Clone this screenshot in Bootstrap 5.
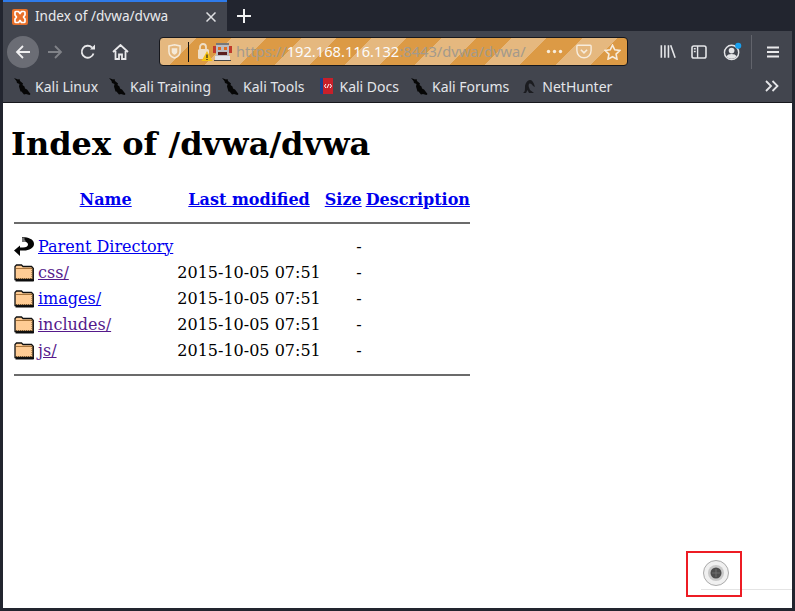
<!DOCTYPE html>
<html lang="en">
<head>
<meta charset="utf-8">
<title>Index of /dvwa/dvwa</title>
<link href="https://cdn.jsdelivr.net/npm/bootstrap@5.3.0/dist/css/bootstrap.min.css" rel="stylesheet">
<style>
html,body{height:100%;margin:0}
body{background:#22252f;overflow:hidden;font-family:"Noto Sans",sans-serif}
.frame{width:795px;height:611px;padding:0 3px 3px;position:relative}
.tabstrip{height:31px}
.tabitem{width:224px;height:31px;background:#42454e;border-top:2px solid #2f7bea;color:#e9eaed;font-size:13.6px;padding-left:9px;gap:7px}
.tabitem .tabname{flex:1;white-space:nowrap}
.tabclose{margin-right:11px}
.plusbtn{margin-left:10px}
.toolbar{height:41px;background:#42454e;padding-left:4px}
.navback{width:32px;height:32px;border-radius:50%;background:#6b6d75;flex:none}
.navitem{width:32px;height:32px;flex:none}
.navgap{margin-left:1px}
.urlbar{width:469px;height:29px;margin-left:23px;border:1px solid #17181d;border-radius:4px;flex:none;
 background:repeating-linear-gradient(135deg,#dc9a45 0,#dc9a45 1.4px,#e5b87f 1.4px,#e5b87f 26.15px,#dc9a45 26.15px,#dc9a45 49.5px);font-size:14.7px;white-space:nowrap;overflow:hidden}
.urlshield{margin-left:8px}
.urlsep{width:1px;height:20px;background:#111;margin:0 8px 0 7px}
.urlrobot{margin:0 4px 0 0}
.urlgrey{color:#a39a8c}
.urlhost{color:#fbfbfb}
.urlpocket{margin:0 12px 0 13px}
.urlstar{margin-right:6px}
.rightgroup{margin-left:24px}
.ricon-lib{margin:0 15px 0 8px}
.ricon-side{margin-right:16px}
.rsep{width:1px;height:34px;background:#62646c;margin:0 2px 0 8px}
.ricon-menu{margin-left:13px}
.bookbar{height:31px;background:#42454e;color:#e4e6ea;font-size:14px;padding-left:11px;border-bottom:1px solid #17181d;padding-bottom:2px}
.bookitem{gap:4px;margin-right:11px;white-space:nowrap}
.bookdocs{gap:6px;margin-left:5px;margin-right:12px}
.bookforums{margin-right:13px}
.bookhunter{gap:5px}
.bookmore{margin-left:auto;margin-right:13px}
.pagebody{background:#fff;height:505px;padding:0 8px;font-family:"DejaVu Serif",serif;color:#000;font-size:16px}
.pagebody h1{font-family:"DejaVu Serif",serif;font-weight:700;font-size:32px;margin:0;padding-top:22px;height:72px;line-height:38px}
.listing{border-collapse:separate;border-spacing:2px;margin-top:10px}
.listing th,.listing td{padding:1px;line-height:19px;font-size:16px;vertical-align:middle;white-space:nowrap}
.listing tr.rowfile td{height:24px}
.listing tr.rowfile td:not(:first-child){padding-top:0;padding-bottom:2px}
.listing th{height:24px;text-align:center}
.listing a{color:#0000ee;text-decoration:underline}
.listing a.seen{color:#551a8b}
.listing .rightcell{text-align:right}
.listing svg{display:block}
.rulecell hr{margin:0;border:0;height:2px;background:#6b6b6b;opacity:1}
.listing td.rulecell{height:20px}
.markbox{position:absolute;left:686px;top:551px;width:56px;height:46px;border:2px solid #ed1c24}
.markline{position:absolute;left:701px;top:589px;width:91px;height:1px;background:#e4e4e4}
.markdot{position:absolute;left:703px;top:560px;width:26px;height:26px}
</style>
</head>
<body>
<div class="frame">
  <svg width="0" height="0" class="d-block position-absolute">
    <defs>
      <symbol id="kali" viewBox="0 0 17 17"><path d="M0 0l4 1.500 1.500-.5.500 2 3 2.500-.5 1.500 2 1.500.5 2 2 1 3.500 4.500-1 1-3.500-1-2 .5-2.500-3-1 0L5 8.500 5.500 6 3 5 2.500 3z" fill="#060606"/></symbol>
      <symbol id="folder" viewBox="0 0 20 20"><path d="M1 5V3.500L2.500 2h5L9 3.500h8.500L19 5v11.500H1z" fill="#ffcc94" stroke="#111" stroke-width="1.300"/><path d="M2 5.500h16" stroke="#a8743a" stroke-width="1"/><path d="M2 15.500h16.500M18 5v11" stroke="#7a5426" stroke-width="1" stroke-dasharray="1 1"/><path d="M1.500 17.800h17.500l1-1V5" fill="none" stroke="#0c0c0c" stroke-width="1.600"/></symbol>
    </defs>
  </svg>
  <div class="tabstrip d-flex align-items-center">
    <div class="tabitem d-flex align-items-center">
      <svg width="16" height="16" viewBox="0 0 16 16"><rect width="16" height="16" rx="2" fill="#e8702a"/><path d="M3 3.500Q3 2.500 4 2.500h2.500L8 4.500l1.500-2H12q1 0 1 1V6l-1.500 2L13 10v2.500q0 1-1 1H9.500L8 11.500l-1.500 2H4q-1 0-1-1V10l1.500-2L3 6z" fill="none" stroke="#fff" stroke-width="1.700" stroke-linejoin="round"/></svg>
      <span class="tabname">Index of /dvwa/dvwa</span>
      <svg class="tabclose" width="10" height="10" viewBox="0 0 10 10"><path d="M.5.500l9 9M9.500.500l-9 9" stroke="#dfe0e3" stroke-width="1.500"/></svg>
    </div>
    <svg class="plusbtn" width="14" height="14" viewBox="0 0 14 14"><path d="M7 0v14M0 7h14" stroke="#f2f2f3" stroke-width="2"/></svg>
  </div>
  <div class="toolbar d-flex align-items-center">
    <div class="navback d-flex align-items-center justify-content-center">
      <svg width="16" height="16" viewBox="0 0 16 16"><path d="M15 8H2M8 2L2 8l6 6" fill="none" stroke="#f0f0f1" stroke-width="1.800"/></svg>
    </div>
    <div class="navitem d-flex align-items-center justify-content-center">
      <svg width="16" height="16" viewBox="0 0 16 16"><path d="M1 8h13M8 2l6 6-6 6" fill="none" stroke="#808288" stroke-width="1.800"/></svg>
    </div>
    <div class="navitem navgap d-flex align-items-center justify-content-center">
      <svg width="16" height="16" viewBox="0 0 16 16"><path d="M13.500 9.500A6 6 0 1 1 12 3.500" fill="none" stroke="#e9e9eb" stroke-width="1.800"/><path d="M10 5.500h5v-5z" fill="#e9e9eb"/></svg>
    </div>
    <div class="navitem d-flex align-items-center justify-content-center">
      <svg width="17" height="16" viewBox="0 0 17 16"><path d="M1 8l7.500-7L16 8M3.500 7v8h3.500v-4.500h3V15h3.500V7" fill="none" stroke="#e9e9eb" stroke-width="1.800"/></svg>
    </div>
    <div class="urlbar d-flex align-items-center">
      <svg class="urlshield" width="13" height="15" viewBox="0 0 14 16"><path d="M1 2l6-1.200L13 2v6c0 3.500-3 6-6 7-3-1-6-3.500-6-7z" fill="none" stroke="#f5ead9" stroke-width="1.600"/><path d="M4 4.500h6V8c0 1.800-1.500 3-3 3.600C5.500 11 4 9.800 4 8z" fill="#f5ead9"/></svg>
      <span class="urlsep"></span>
      <svg width="16" height="20" viewBox="0 0 16 20"><path d="M3 7V5a3 3 0 0 1 6 0v2" fill="none" stroke="#efdfc7" stroke-width="1.800"/><rect x="1" y="7" width="11" height="10" rx="1.500" fill="#efdfc7"/><path d="M10 9l5.500 10H4.500z" fill="#f6c214"/><path d="M10 12.500v3.500M10 17v1" stroke="#222" stroke-width="1.200"/></svg>
      <svg class="urlrobot" width="19" height="19" viewBox="0 0 18 18" shape-rendering="crispEdges"><rect x="3" y="1" width="12" height="2" fill="#777"/><rect x="3" y="3" width="12" height="10" fill="#b9bcc2"/><rect x="0" y="4" width="3" height="6" fill="#c0392b"/><rect x="15" y="4" width="3" height="6" fill="#c0392b"/><rect x="5" y="5" width="3" height="3" fill="#e06a1e"/><rect x="10" y="5" width="3" height="3" fill="#e06a1e"/><rect x="5" y="9" width="8" height="3" fill="#5a1f1f"/><rect x="2" y="13" width="14" height="4" fill="#e3e5ea"/><rect x="1" y="17" width="16" height="1" fill="#444"/></svg>
      <span class="urlgrey">https://</span><span class="urlhost">192.168.116.132</span><span class="urlgrey">:8443/dvwa/dvwa/</span>
      <span class="ms-auto d-flex align-items-center">
        <svg width="17" height="5" viewBox="0 0 17 5"><circle cx="2.500" cy="2.500" r="1.700" fill="#f7ecdc"/><circle cx="8.500" cy="2.500" r="1.700" fill="#f7ecdc"/><circle cx="14.500" cy="2.500" r="1.700" fill="#f7ecdc"/></svg>
        <svg class="urlpocket" width="16" height="15" viewBox="0 0 18 16"><path d="M2 1h14a1 1 0 0 1 1 1v5a8 8 0 0 1-16 0V2a1 1 0 0 1 1-1z" fill="none" stroke="#f7ecdc" stroke-width="1.600"/><path d="M5.500 6L9 9.500 12.500 6" fill="none" stroke="#f7ecdc" stroke-width="1.800"/></svg>
        <svg class="urlstar" width="17" height="16" viewBox="0 0 18 17"><path d="M9 1.200l2.400 5 5.400.7-4 3.800 1 5.400L9 13.500l-4.800 2.600 1-5.400-4-3.800 5.400-.7z" fill="none" stroke="#f7ecdc" stroke-width="1.700"/></svg>
      </span>
    </div>
    <div class="rightgroup d-flex align-items-center">
      <svg class="ricon-lib" width="16" height="15" viewBox="0 0 18 16"><path d="M1.500 1v14M5.500 1v14M9.500 1v14M12 1l5 14" stroke="#e4e5e8" stroke-width="1.800" fill="none"/></svg>
      <svg class="ricon-side" width="16" height="14" viewBox="0 0 17 15"><rect x="1" y="1" width="15" height="13" rx="2" fill="none" stroke="#e4e5e8" stroke-width="1.700"/><path d="M7 1v13M3 4h2M3 7h2" stroke="#e4e5e8" stroke-width="1.500"/></svg>
      <svg width="20" height="19" viewBox="0 0 21 20"><circle cx="9" cy="11" r="7.500" fill="none" stroke="#e4e5e8" stroke-width="1.500"/><circle cx="9" cy="9" r="3" fill="#e4e5e8"/><path d="M3.500 15a6 4 0 0 1 11 0 7 7 0 0 1-11 0z" fill="#e4e5e8"/><circle cx="16" cy="4" r="3.200" fill="#18a0f0"/></svg>
      <span class="rsep"></span>
      <svg class="ricon-menu" width="12" height="12" viewBox="0 0 12 12"><path d="M0 1.500h12M0 6h12M0 10.500h12" stroke="#e9e9eb" stroke-width="1.800"/></svg>
    </div>
  </div>
  <div class="bookbar d-flex align-items-center">
    <span class="bookitem d-flex align-items-center"><svg width="17" height="17"><use href="#kali"/></svg>Kali Linux</span>
    <span class="bookitem d-flex align-items-center"><svg width="17" height="17"><use href="#kali"/></svg>Kali Training</span>
    <span class="bookitem d-flex align-items-center"><svg width="17" height="17"><use href="#kali"/></svg>Kali Tools</span>
    <span class="bookitem bookdocs d-flex align-items-center"><svg width="13" height="16" viewBox="0 0 13 16"><rect width="13" height="16" fill="#c8202a"/><rect width="3" height="16" fill="#1d3f8a"/><path d="M6 6L4.500 8 6 10M10 6l1.500 2L10 10M7 10l2-4" stroke="#fff" fill="none"/></svg>Kali Docs</span>
    <span class="bookitem bookforums d-flex align-items-center"><svg width="17" height="17"><use href="#kali"/></svg>Kali Forums</span>
    <span class="bookitem bookhunter d-flex align-items-center"><svg width="15" height="16" viewBox="0 0 15 16"><path d="M1 15c2-1 2-3 2-6 0-3 2-7 5-7 2 0 3 2 4 4l1 3-2-1c-1-2-3-3-4-2s0 4 1 6l4 3H7L5.500 12 4 15z" fill="#1b1c20"/></svg>NetHunter</span>
    <svg class="bookmore" width="14" height="12" viewBox="0 0 14 12"><path d="M1 1l5 5-5 5M7.500 1l5 5-5 5" fill="none" stroke="#e4e5e8" stroke-width="1.800"/></svg>
  </div>
  <div class="pagebody">
    <h1>Index of /dvwa/dvwa</h1>
    <table class="listing">
      <tr><th></th><th><a href="#">Name</a></th><th><a href="#">Last modified</a></th><th><a href="#">Size</a></th><th><a href="#">Description</a></th></tr>
      <tr><td colspan="5" class="rulecell"><hr></td></tr>
      <tr class="rowfile"><td><svg width="20" height="20" viewBox="0 0 20 20"><path d="M8 0l3 .3C16 1 20 3 20 7c0 4-5 6.500-10 6.500H6V19l-6-5.500L6 8.500v2h3c3 0 5-1 5-3S11 4 8 4z" fill="#050505"/><path d="M8 .5h2.500v2l1 1-1 1.500H8z" fill="#777"/></svg></td><td><a href="#">Parent Directory</a></td><td></td><td class="rightcell">- </td><td></td></tr>
      <tr class="rowfile"><td><svg width="20" height="20"><use href="#folder"/></svg></td><td><a class="seen" href="#">css/</a></td><td>2015-10-05 07:51</td><td class="rightcell">- </td><td></td></tr>
      <tr class="rowfile"><td><svg width="20" height="20"><use href="#folder"/></svg></td><td><a href="#">images/</a></td><td>2015-10-05 07:51</td><td class="rightcell">- </td><td></td></tr>
      <tr class="rowfile"><td><svg width="20" height="20"><use href="#folder"/></svg></td><td><a class="seen" href="#">includes/</a></td><td>2015-10-05 07:51</td><td class="rightcell">- </td><td></td></tr>
      <tr class="rowfile"><td><svg width="20" height="20"><use href="#folder"/></svg></td><td><a class="seen" href="#">js/</a></td><td>2015-10-05 07:51</td><td class="rightcell">- </td><td></td></tr>
      <tr><td colspan="5" class="rulecell"><hr></td></tr>
    </table>
  </div>
  <div class="markline"></div>
  <div class="markbox"></div>
  <svg class="markdot" viewBox="0 0 26 26"><circle cx="13" cy="13" r="12.500" fill="#f0f0f0" stroke="#aaa"/><circle cx="13" cy="13" r="8" fill="#c9c9c9"/><circle cx="13" cy="13" r="5.500" fill="#4d4d4d"/><path d="M13 9v8M9 13h8" stroke="#777" stroke-width=".8"/></svg>
</div>
</body>
</html>
